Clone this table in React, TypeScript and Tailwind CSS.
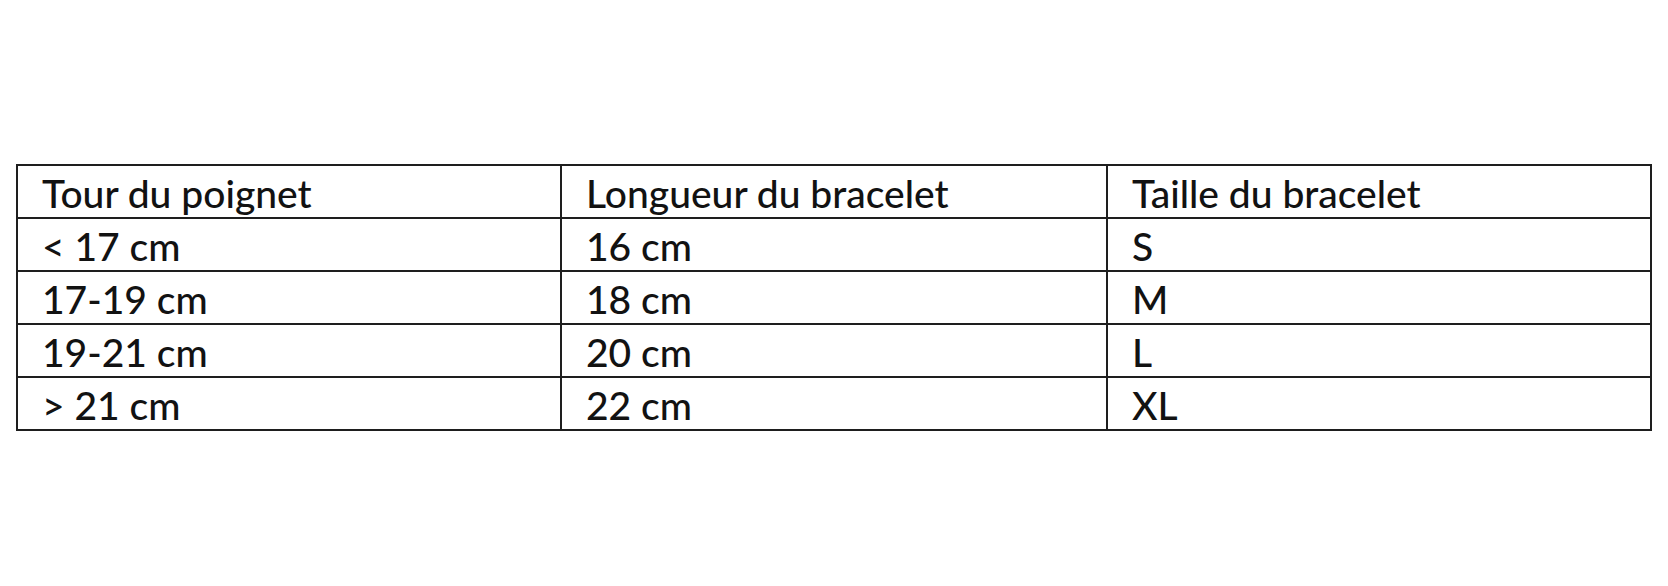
const rows = [
  ['Tour du poignet', 'Longueur du bracelet', 'Taille du bracelet'],
  ['< 17 cm', '16 cm', 'S'],
  ['17-19 cm', '18 cm', 'M'],
  ['19-21 cm', '20 cm', 'L'],
  ['> 21 cm', '22 cm', 'XL'],
]

export default function App() {
  return (
    <div className="w-[1668px] h-[586px] bg-white pt-[164px] pl-[16px]">
      <table
        className="border-collapse text-[#121212] text-[39px] leading-none font-medium"
        style={{ fontFamily: 'Lato, "Open Sans", sans-serif' }}
      >
        <colgroup>
          <col className="w-[544px]" />
          <col className="w-[546px]" />
          <col className="w-[544px]" />
        </colgroup>
        <tbody>
          {rows.map((row, i) => (
            <tr key={i} className="h-[53px]">
              {row.map((cell, j) => (
                <td
                  key={j}
                  className="border-2 border-[#1e1e1e] pl-[24px] pt-[3px] align-middle whitespace-nowrap"
                >
                  {cell}
                </td>
              ))}
            </tr>
          ))}
        </tbody>
      </table>
    </div>
  )
}
